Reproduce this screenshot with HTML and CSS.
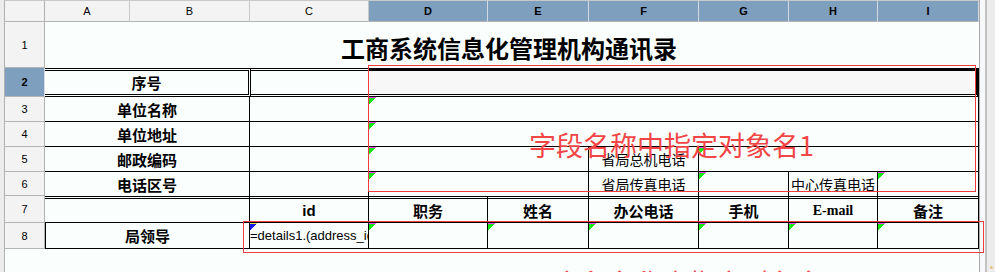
FILE: index.html
```html
<!DOCTYPE html>
<html>
  <head>
    <link rel="stylesheet" href="styles.css">
  </head>
  <body>
    <div class="sheet">
      <div class="hd top rh"></div>
      <div class="hd top">A</div>
      <div class="hd top">B</div>
      <div class="hd top">C</div>
      <div class="hd top sel">D</div>
      <div class="hd top sel">E</div>
      <div class="hd top sel">F</div>
      <div class="hd top sel">G</div>
      <div class="hd top sel">H</div>
      <div class="hd top sel">I</div>
      <div class="vscroll"></div>

      <div class="hd rh">1</div>
      <div class="title s9">工商系统信息化管理机构通讯录</div>

      <div class="hd rh sel">2</div>
      <div class="cell r2 ab s2 b">序号</div>
      <div class="cell r2"></div>
      <div class="cell r2 di s6"></div>

      <div class="hd rh">3</div>
      <div class="cell rm s2 b">单位名称</div>
      <div class="cell rm"></div>
      <div class="cell rm s6"><i class="mk"></i></div>

      <div class="hd rh">4</div>
      <div class="cell rm s2 b">单位地址</div>
      <div class="cell rm"></div>
      <div class="cell rm s6"><i class="mk"></i></div>

      <div class="hd rh">5</div>
      <div class="cell rm s2 b">邮政编码</div>
      <div class="cell rm"></div>
      <div class="cell rm s2"><i class="mk"></i></div>
      <div class="cell rm n">省局总机电话</div>
      <div class="cell rm s3"><i class="mk"></i></div>

      <div class="hd rh">6</div>
      <div class="cell s2 b">电话区号</div>
      <div class="cell"></div>
      <div class="cell s2"><i class="mk"></i></div>
      <div class="cell n">省局传真电话</div>
      <div class="cell"><i class="mk"></i></div>
      <div class="cell n">中心传真电话</div>
      <div class="cell"><i class="mk"></i></div>

      <div class="hd rh">7</div>
      <div class="cell r7 s2"></div>
      <div class="cell r7 b latin">id</div>
      <div class="cell r7 b">职务</div>
      <div class="cell r7 b">姓名</div>
      <div class="cell r7 b">办公电话</div>
      <div class="cell r7 b">手机</div>
      <div class="cell r7 b serif">E-mail</div>
      <div class="cell r7 b">备注</div>

      <div class="hd rh">8</div>
      <div class="cell r8 ab8 s2 b">局领导</div>
      <div class="cell r8 code"><i class="mk blue"></i>=details1.(address_id)</div>
      <div class="cell r8"><i class="mk"></i></div>
      <div class="cell r8"><i class="mk"></i></div>
      <div class="cell r8"><i class="mk"></i></div>
      <div class="cell r8"><i class="mk"></i></div>
      <div class="cell r8"><i class="mk"></i></div>
      <div class="cell r8"><i class="mk"></i></div>

      <div class="rh fill"></div>

      <!-- data regions drawn over the grid -->
      <div class="zone zone1"></div>
      <div class="zone-text text1">字段名称中指定对象名1</div>
      <div class="zone zone2"></div>
      <div class="zone-text text2">字段名称中指定对象名2</div>
    </div>
  </body>
</html>
```

FILE: styles.css
```css
body {
  margin: 0;
  background-color: #fafffe;
  font-family: "Noto Sans CJK SC", sans-serif;
  color: #000;
}

.sheet {
  position: relative;
  display: grid;
  grid-template-columns: 45px 85px 120px 119px 119px 101px 110px 90px 89px 101px 16px;
  grid-template-rows: 22px 46px 29px 25px 25px 25px 24px 27px 26px 23px;
  height: 272px;
  overflow: hidden;
  background: linear-gradient(to right, #ececec 4px, #fafffe 4px);
}

/* headers */
.hd {
  display: flex;
  align-items: center;
  justify-content: center;
  box-sizing: border-box;
  background-color: #f3f3f3;
  border-right: 1px solid #c8c8c8;
  border-bottom: 1px solid #b4b4b4;
  font-family: "Liberation Sans", sans-serif;
  font-size: 11px;
}

.hd.top {
  border-top: 1px solid #c8c8c8;
}

.hd.sel {
  background-color: #7f9fbf;
  border-right-color: #d4dae2;
  font-weight: bold;
}

.rh {
  margin-left: 4px;
  border-left: 1px solid #b0b0b0;
  border-right-color: #b0b0b0;
}

.fill {
  grid-column: 1;
}

.vscroll {
  grid-column: 11;
  grid-row: 1 / -1;
  position: relative;
  border-left: 1px solid #a8a8a8;
  background: linear-gradient(to right, #f6f8fa 5px, #c2c2c2 5px, #c2c2c2 7px, #ececec 7px);
}

.vscroll::after {
  content: "";
  position: absolute;
  right: 2px;
  bottom: 3px;
  width: 3px;
  height: 3px;
  border-radius: 50%;
  background-color: #e2c27e;
}

.s2 { grid-column: span 2; }
.s3 { grid-column: span 3; }
.s6 { grid-column: span 6; }
.s9 { grid-column: span 9; }

.title {
  display: flex;
  align-items: center;
  justify-content: center;
  padding-top: 5px;
  padding-right: 6px;
  font-size: 24px;
  font-weight: bold;
}

/* table cells */
.cell {
  position: relative;
  display: flex;
  align-items: center;
  justify-content: center;
  border-right: 1px solid #000;
  font-size: 15px;
  white-space: nowrap;
}

.b {
  font-weight: bold;
}

.n {
  font-size: 14px;
}

.latin {
  font-family: "Liberation Sans", sans-serif;
}

.serif {
  font-family: "Liberation Serif", serif;
  font-size: 14px;
}

.r2 {
  border-top: 3px double #000;
  border-bottom: 3px double #000;
}

.r2.ab {
  border-right: 3px double #000;
  margin-right: -1px;
}

.r2.di {
  border-top: 3px solid #000;
  border-right: 3px solid #000;
  background-color: #f7f7f7;
}

.rm {
  border-bottom: 1px solid #000;
}

.r7 {
  border-top: 3px double #000;
  border-bottom: 1px solid #000;
}

.r8 {
  border-bottom: 1px solid #000;
}

.ab8 {
  border-left: 1px solid #000;
}

.code {
  justify-content: flex-start;
  overflow: hidden;
  font-family: "Liberation Sans", sans-serif;
  font-size: 13px;
}

.mk {
  position: absolute;
  top: 0;
  left: 0;
  width: 7px;
  height: 6px;
  border-top: 1px solid #ff40ff;
  background: linear-gradient(135deg, #14e814 50%, transparent 50%);
}

.mk.blue {
  border-top-color: #e8e040;
  background: linear-gradient(135deg, #1818f0 50%, transparent 50%);
}

/* red data regions */
.zone {
  position: absolute;
  box-sizing: border-box;
  border: 1px solid #f03c3c;
}

.zone1 {
  left: 368px;
  top: 65px;
  width: 608px;
  height: 127px;
}

.zone2 {
  left: 243px;
  top: 221px;
  width: 741px;
  height: 32px;
}

.zone-text {
  position: absolute;
  color: #f24646;
  font-size: 27px;
  line-height: 27px;
  white-space: nowrap;
}

.text1 {
  left: 529px;
  top: 131px;
}

.text2 {
  left: 554px;
  top: 269px;
}
```
